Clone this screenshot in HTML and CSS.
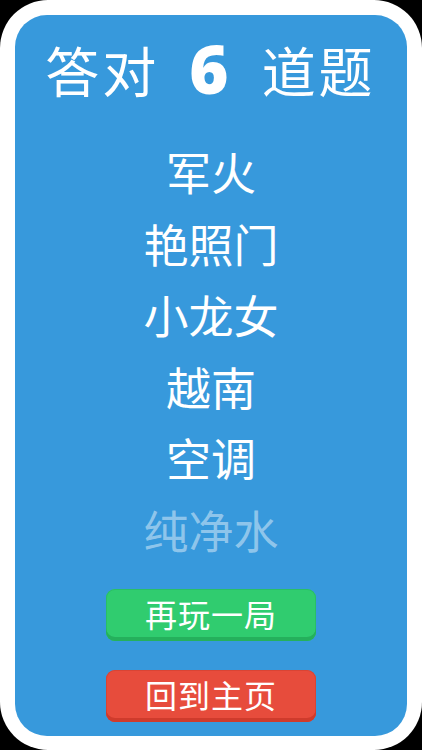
FILE: index.html
```html
<!DOCTYPE html>
<html lang="zh">
<head>
<meta charset="utf-8">
<link rel="stylesheet" href="styles.css">
</head>
<body>
<div class="frame">
  <div class="panel">
    <div class="title">
      <span class="t-word">答对</span>
      <span class="t-num">6</span>
      <span class="t-word">道题</span>
    </div>
    <ul class="answers">
      <li>军火</li>
      <li>艳照门</li>
      <li>小龙女</li>
      <li>越南</li>
      <li>空调</li>
      <li class="missed">纯净水</li>
    </ul>
    <div class="buttons">
      <button class="btn btn-green">再玩一局</button>
      <button class="btn btn-red">回到主页</button>
    </div>
  </div>
</div>
</body>
</html>
```

FILE: styles.css
```css
html, body {
  margin: 0;
  padding: 0;
  background: #000;
}
body {
  width: 422px;
  height: 750px;
  overflow: hidden;
  font-family: "Noto Sans CJK SC", "Noto Sans", sans-serif;
}
.frame {
  width: 422px;
  height: 750px;
  box-sizing: border-box;
  background: #fff;
  border-radius: 48px;
  padding: 15px 15px 14px 15px;
}
.panel {
  height: 100%;
  background: #3799dc;
  border-radius: 32px;
  display: flex;
  flex-direction: column;
  align-items: center;
  color: #fff;
}
.title {
  margin-top: 28px;
  display: flex;
  align-items: center;
  gap: 33px;
  height: 54px;
  position: relative;
  left: -2px;
}
.t-word {
  font-size: 54px;
  line-height: 1;
  letter-spacing: 3px;
  margin-right: -3px;
}
.t-num {
  font-family: "Open Sans", "DejaVu Sans", sans-serif;
  font-weight: 800;
  font-size: 67px;
  line-height: 1;
  position: relative;
  top: -2px;
}
.answers {
  list-style: none;
  margin: 39px 0 0 0;
  padding: 0;
  text-align: center;
}
.answers li {
  font-size: 45px;
  line-height: 71.6px;
  height: 71.6px;
}
.answers li.missed {
  color: rgba(255, 255, 255, 0.45);
}
.buttons {
  margin-top: 23px;
  display: flex;
  flex-direction: column;
  gap: 29px;
}
.btn {
  width: 210px;
  height: 52px;
  border: none;
  border-radius: 9px;
  font-family: "Noto Sans CJK SC", "Noto Sans", sans-serif;
  font-size: 32px;
  line-height: 1;
  color: #fff;
  padding: 0 0 4px 0;
  letter-spacing: 1px;
}
.btn-green {
  background: #30cc6f;
  box-shadow: inset 0 -4px 0 #25b05c, inset 0 0 0 1px #2abf64;
}
.btn-red {
  background: #e74c3c;
  box-shadow: inset 0 -4px 0 #cf3b2c, inset 0 0 0 1px #d94434;
}
```
